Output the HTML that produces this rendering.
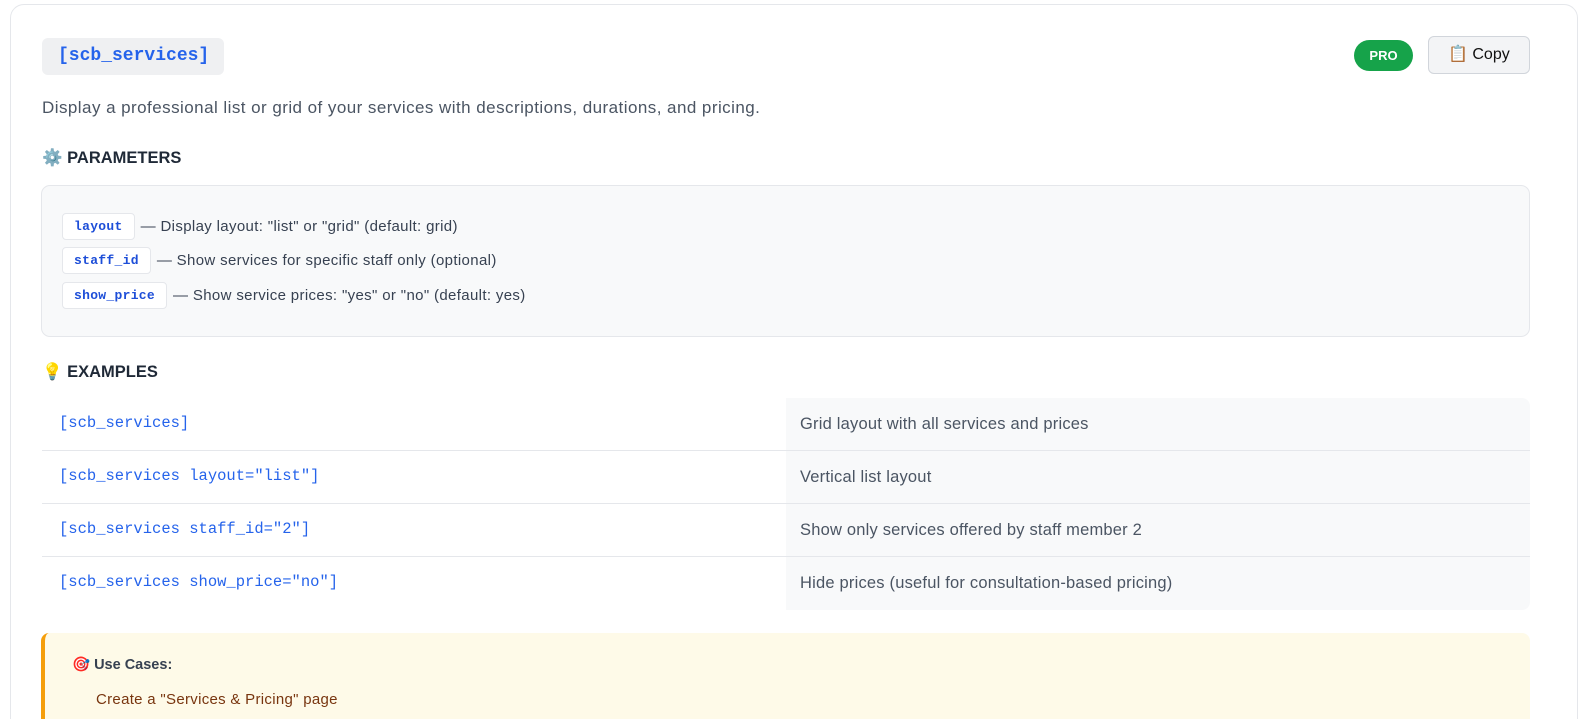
<!DOCTYPE html>
<html><head><meta charset="utf-8"><style>
*{box-sizing:border-box;margin:0;padding:0}
html,body{width:1588px;height:719px;overflow:hidden}
body{background:#fff;font-family:"Liberation Sans",sans-serif;color:#374151;position:relative}
.card{position:absolute;left:10px;top:4px;width:1568px;height:740px;border:1px solid #e5e7eb;border-radius:14px;background:#fff}
.title{position:absolute;left:42px;top:38px;width:182px;height:37px;background:#eff0f2;border-radius:6px;font-family:"Liberation Mono",monospace;font-weight:bold;font-size:18px;color:#2563eb;line-height:37px;padding-left:16px}
.pro{position:absolute;left:1354px;top:40px;width:59px;height:31px;background:#16a34a;border-radius:16px;color:#fff;font-weight:bold;font-size:13px;text-align:center;line-height:31px}
.copy{position:absolute;left:1428px;top:36px;width:102px;height:38px;background:#f3f4f6;border:1px solid #d1d5db;border-radius:6px;font-size:16px;color:#111;line-height:36px;padding-left:19px}
.desc{position:absolute;left:42px;top:98px;font-size:17px;letter-spacing:0.45px;color:#4b5563}
.h{position:absolute;left:42px;font-size:16.5px;font-weight:bold;color:#1f2937}
.params{position:absolute;left:41px;top:185px;width:1489px;height:152px;background:#f8f9fa;border:1px solid #e5e7eb;border-radius:9px}
.row{position:absolute;left:20px;font-size:15px;letter-spacing:0.35px;color:#374151;display:flex;align-items:center}
.chip{background:#fff;border:1px solid #e5e7eb;border-radius:4px;font-family:"Liberation Mono",monospace;font-weight:bold;font-size:13px;letter-spacing:0.3px;color:#1d4ed8;height:27px;line-height:25px;padding:0 11px;margin-right:6px}
.tbl{position:absolute;left:42px;top:398px;width:1488px}
.tr{height:53px;display:flex;border-bottom:1px solid #e5e7eb}
.tr:last-child{border-bottom:none}
.tl{width:744px;font-family:"Liberation Mono",monospace;font-size:15.5px;color:#2563eb;padding:16px 0 0 17px}
.tv{width:744px;background:#f8f9fa;font-size:16.5px;letter-spacing:0.2px;color:#4b5563;padding:17px 0 0 14px}
.use{position:absolute;left:41px;top:633px;width:1489px;height:120px;background:#fefae8;border-left:4px solid #f59e0b;border-radius:8px}
</style></head><body>
<div class="card"></div>
<div class="title">[scb_services]</div>
<div class="pro">PRO</div>
<div class="copy">📋 Copy</div>
<div class="desc">Display a professional list or grid of your services with descriptions, durations, and pricing.</div>
<div class="h" style="top:149px">⚙️ PARAMETERS</div>
<div class="params">
<div class="row" style="top:27px"><span class="chip">layout</span>— Display layout: "list" or "grid" (default: grid)</div>
<div class="row" style="top:61px"><span class="chip">staff_id</span>— Show services for specific staff only (optional)</div>
<div class="row" style="top:96px"><span class="chip">show_price</span>— Show service prices: "yes" or "no" (default: yes)</div>
</div>
<div class="h" style="top:363px">💡 EXAMPLES</div>
<div class="tbl">
<div class="tr"><div class="tl">[scb_services]</div><div class="tv" style="border-top-right-radius:8px">Grid layout with all services and prices</div></div>
<div class="tr"><div class="tl">[scb_services layout="list"]</div><div class="tv">Vertical list layout</div></div>
<div class="tr"><div class="tl">[scb_services staff_id="2"]</div><div class="tv">Show only services offered by staff member 2</div></div>
<div class="tr"><div class="tl">[scb_services show_price="no"]</div><div class="tv" style="border-bottom-right-radius:8px">Hide prices (useful for consultation-based pricing)</div></div>
</div>
<div class="use">
<div style="position:absolute;left:27px;top:23px;font-size:14.5px;font-weight:bold;color:#374151">🎯 Use Cases:</div>
<div style="position:absolute;left:51px;top:58px;font-size:15px;letter-spacing:0.3px;color:#78350f">Create a "Services &amp; Pricing" page</div>
</div>
</body></html>
